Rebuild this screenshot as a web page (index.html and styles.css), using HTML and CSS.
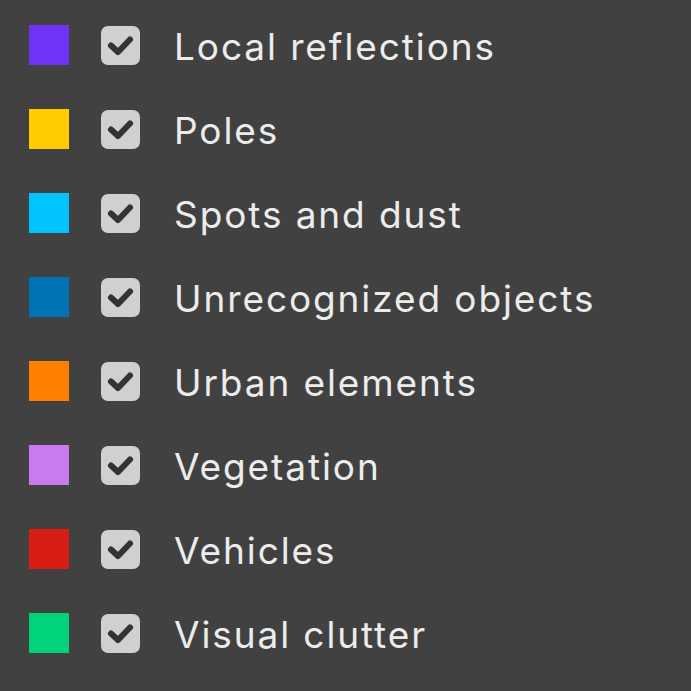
FILE: index.html
```html
<!DOCTYPE html>
<html>
<head>
<meta charset="utf-8">
<link rel="stylesheet" href="styles.css">
</head>
<body>
<ul class="legend">
  <li class="row"><span class="swatch c1"></span><span class="check"><svg viewBox="0 0 39 39"><path d="M10 19.5 L17 26 L29 13.5" /></svg></span><span class="label">Local reflections</span></li>
  <li class="row"><span class="swatch c2"></span><span class="check"><svg viewBox="0 0 39 39"><path d="M10 19.5 L17 26 L29 13.5" /></svg></span><span class="label">Poles</span></li>
  <li class="row"><span class="swatch c3"></span><span class="check"><svg viewBox="0 0 39 39"><path d="M10 19.5 L17 26 L29 13.5" /></svg></span><span class="label">Spots and dust</span></li>
  <li class="row"><span class="swatch c4"></span><span class="check"><svg viewBox="0 0 39 39"><path d="M10 19.5 L17 26 L29 13.5" /></svg></span><span class="label">Unrecognized objects</span></li>
  <li class="row"><span class="swatch c5"></span><span class="check"><svg viewBox="0 0 39 39"><path d="M10 19.5 L17 26 L29 13.5" /></svg></span><span class="label">Urban elements</span></li>
  <li class="row"><span class="swatch c6"></span><span class="check"><svg viewBox="0 0 39 39"><path d="M10 19.5 L17 26 L29 13.5" /></svg></span><span class="label">Vegetation</span></li>
  <li class="row"><span class="swatch c7"></span><span class="check"><svg viewBox="0 0 39 39"><path d="M10 19.5 L17 26 L29 13.5" /></svg></span><span class="label">Vehicles</span></li>
  <li class="row"><span class="swatch c8"></span><span class="check"><svg viewBox="0 0 39 39"><path d="M10 19.5 L17 26 L29 13.5" /></svg></span><span class="label">Visual clutter</span></li>
</ul>
</body>
</html>
```
FILE: styles.css
```css
html, body {
  margin: 0;
  padding: 0;
  background: #414141;
  width: 691px;
  height: 691px;
  overflow: hidden;
}
.legend {
  list-style: none;
  margin: 0;
  padding: 3px 0 0 29px;
}
.row {
  display: flex;
  align-items: center;
  height: 84px;
}
.swatch {
  width: 40px;
  height: 40px;
  flex: none;
}
.check {
  margin-left: 32px;
  width: 39px;
  height: 39px;
  border-radius: 7px;
  background: #d0d0d0;
  flex: none;
  display: flex;
}
.check svg {
  width: 39px;
  height: 39px;
}
.check path {
  fill: none;
  stroke: #333333;
  stroke-width: 6;
  stroke-linecap: round;
  stroke-linejoin: round;
}
.label {
  margin-left: 34px;
  font-family: Inter, "Liberation Sans", Arial, sans-serif;
  font-size: 37px;
  color: #ececec;
  letter-spacing: 1.9px;
  position: relative;
  top: 1px;
}
.c1 { background: #6e33f5; }
.c2 { background: #ffcc00; }
.c3 { background: #00c3ff; }
.c4 { background: #0073b5; }
.c5 { background: #ff8000; }
.c6 { background: #c97aec; }
.c7 { background: #d81e12; }
.c8 { background: #00d37a; }
```
